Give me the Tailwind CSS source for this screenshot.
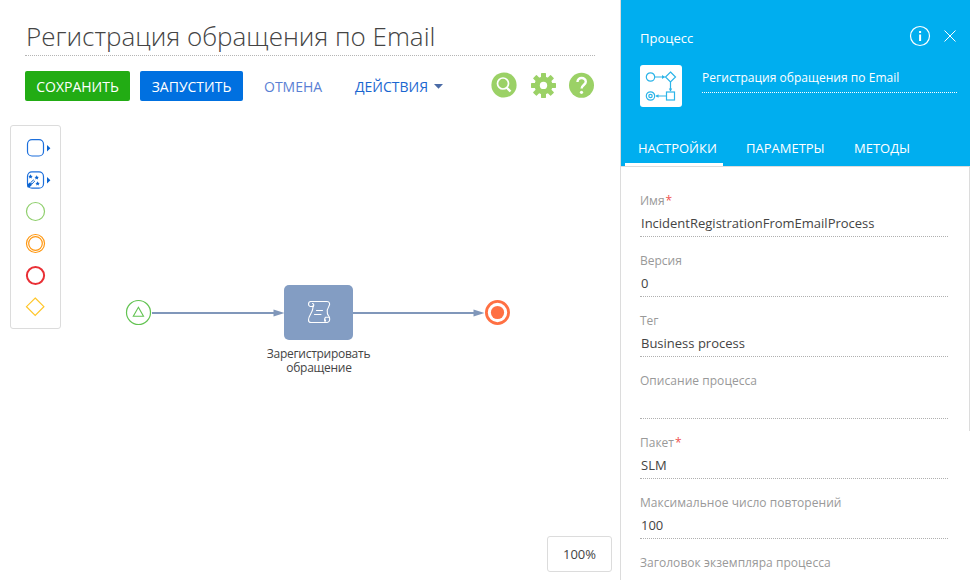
<!DOCTYPE html>
<html lang="ru">
<head>
<meta charset="utf-8">
<title>Регистрация обращения по Email</title>
<script src="https://cdn.jsdelivr.net/npm/@tailwindcss/browser@4"></script>
</head>
<body class="w-[970px] h-[580px] overflow-hidden bg-white font-['Open_Sans','Noto_Sans',sans-serif] text-[#444] whitespace-nowrap">
<div class="flex h-full">
  <main class="relative flex w-[620px] shrink-0 flex-col">
    <header class="ml-[25px] mr-[25px] h-[56px] border-b border-dotted border-[#b5b5b5] pt-[18px]">
      <h1 class="pl-px text-[26px] leading-[36px] font-light">Регистрация обращения по Email</h1>
    </header>
    <div class="flex h-[60px] items-center pl-[25px] text-[14px]">
      <button class="h-[30px] w-[105px] rounded-[2px] bg-[#22ac14] text-white pt-px">СОХРАНИТЬ</button>
      <button class="ml-[10px] h-[30px] w-[103px] rounded-[2px] bg-[#0070e0] text-white pt-px">ЗАПУСТИТЬ</button>
      <button class="ml-[21px] w-[59px] text-left text-[#5a7fd4] pt-px">ОТМЕНА</button>
      <button class="ml-[32px] flex w-[136px] items-center text-[#1a66d0] pt-px">ДЕЙСТВИЯ
        <svg class="ml-[6px]" width="9" height="5" viewBox="0 0 9 5"><path d="M0 0h9L4.5 4.7z" fill="#4a6ba6"/></svg>
      </button>
      <svg class="-mt-[3px]" width="104" height="26" viewBox="0 0 104 26">
        <g fill="#9bd166">
          <circle cx="13" cy="13" r="12.6"/>
          <circle cx="90.500" cy="13.300" r="12.500"/>
          <g transform="translate(52.500 13.400)">
            <circle r="9"/>
            <g id="teeth"><rect x="-2.500" y="-12.500" width="5" height="25" rx=".6"/><rect x="-12.500" y="-2.500" width="25" height="5" rx=".6"/></g>
            <use href="#teeth" transform="rotate(45)"/>
            <circle r="3.700" fill="#fff"/>
          </g>
        </g>
        <circle cx="12" cy="11.500" r="5.500" fill="none" stroke="#fff" stroke-width="1.700"/>
        <path d="M15.500 15.500l4 4" stroke="#fff" stroke-width="2.400"/>
        <path d="M86.500 10c0-5.300 8.300-5.200 8.300-.3 0 3.200-4.200 3.400-4.200 6.800" fill="none" stroke="#fff" stroke-width="2.400"/>
        <circle cx="90.500" cy="20.300" r="1.600" fill="#fff"/>
      </svg>
    </div>
    <aside class="ml-[10px] mt-[9px] h-[204px] w-[51px] rounded-[3px] border border-[#dcdcdc]">
      <svg width="49" height="202" viewBox="11 126 49 202" fill="none">
        <g stroke="#1c6fdc" stroke-width="1.200">
          <rect x="27.500" y="139.700" width="16" height="16.300" rx="4.500"/>
          <rect x="27.500" y="171.900" width="16" height="16.300" rx="4.500"/>
        </g>
        <g fill="#0a63cf">
          <path d="M47 145v6.500l3.400-3.200zM47 177v6.500l3.400-3.200z"/>
          <path d="M30.500 174.300l.7 1.400 1.500.2-1.100 1.100.3 1.500-1.400-.7-1.400.7.300-1.500-1.100-1.100 1.500-.2z"/>
          <path d="M36.700 175.300l.7 1.400 1.500.2-1.100 1.100.3 1.500-1.400-.7-1.400.7.300-1.500-1.100-1.100 1.500-.2z"/>
          <path d="M37.600 181.300l.7 1.400 1.500.2-1.100 1.100.3 1.500-1.400-.7-1.400.7.300-1.500-1.100-1.100 1.500-.2z"/>
          <path d="M27.300 184.600l2.500-2.200 2.300 2.300-2.800 2.800-2-.3z"/>
        </g>
        <path d="M30.500 182.800l2.900-2.800 1.200 1.200-2.800 2.900z" stroke="#0a63cf"/>
        <circle cx="35.500" cy="211.500" r="9" stroke="#8fcf6c" stroke-width="1.200"/>
        <g stroke="#ff9710" stroke-width="1.200"><circle cx="35.500" cy="243.500" r="9"/><circle cx="35.500" cy="243.500" r="6.800"/></g>
        <circle cx="35.500" cy="275.500" r="8.600" stroke="#e92f35" stroke-width="2"/>
        <path d="M35.200 298.000l8.700 8.700-8.700 8.700-8.700-8.700z" stroke="#ffc629" stroke-width="1.200"/>
      </svg>
    </aside>

    <!-- process diagram -->
    <svg class="absolute left-[120px] top-[280px]" width="400" height="65" viewBox="120 280 400 65" fill="none">
      <path d="M152 313h124M353 313h123" stroke="#8097ba" stroke-width="2"/>
      <path d="M273.500 309.500l11 3.500-11 3.500zM473.500 309.500l11 3.500-11 3.500z" fill="#8097ba"/>
      <circle cx="138.500" cy="312.500" r="12" stroke="#62c351" stroke-width="1.200"/>
      <path d="M138.400 307.300l5.100 8.900h-10.200z" stroke="#62c351" stroke-width="1.100"/>
      <rect x="284" y="285" width="69" height="55" rx="5" fill="#839dc3"/>
      <g stroke="#fff" stroke-width="1.100" stroke-linejoin="round" stroke-linecap="round">
        <path d="M310.800 301.500h16.200c2.700 0 3.300 2.800 1.900 4.700-1.500 2.200-2.200 4.500-1.500 7.300.5 2 1.800 2.700 2.200 4.600.5 2.600-.8 4.400-2.700 4.400h-15.900c-1.700 0-2.500-1.100-2.500-2.600 0-4 3.800-6.800 4.300-11.300.2-1.500.3-2.200.3-3.200"/>
        <path d="M310.800 301.500c-2.900 0-3.100 5 0 5h2.300c1-.9 1-2.900-.6-3"/>
        <path d="M328.500 317.300h-2.600c-1.300 0-1.500 2.300-.3 3.200M325.500 317.300c-1.700 1.700-1.200 5.200 1.400 5.200"/>
        <path d="M316.500 310.500h6M314.500 314.500h6.500"/>
      </g>
      <circle cx="497.500" cy="312.500" r="11.100" stroke="#ff7043" stroke-width="2.800"/>
      <circle cx="497.500" cy="312.500" r="6.600" fill="#ff7043"/>
    </svg>
    <div class="absolute left-[258px] top-[347px] w-[120px] text-center text-[12px] leading-[14px] tracking-[-0.27px]"><div class="pl-[1px]">Зарегистрировать</div><div class="pl-[2px]">обращение</div></div>
    <div class="absolute left-[547px] top-[536px] flex h-[36px] w-[65px] items-center justify-center rounded-[3px] border border-[#dcdcdc] pt-[2px] text-[13px]">100%</div>
  </main>

  <section class="flex w-[350px] flex-col border-l border-[#dcdcdc]">
    <div class="flex h-[166px] shrink-0 flex-col bg-[#00aeef] text-white">
      <div class="flex h-[65px] items-start pl-[19px] pt-[25px]">
        <span class="mt-[3px] w-[269px] text-[13px] leading-[20px]">Процесс</span>
        <svg width="50" height="22" viewBox="0 0 50 22" fill="none" stroke="#fff">
          <circle cx="11" cy="11" r="9.500" stroke-width="1.200"/>
          <path d="M11.100 9.500v6.500M11.100 6v2" stroke-width="2"/>
          <path d="M35.500 5.500l11 11M46.500 5.500l-11 11"/>
        </svg>
      </div>
      <div class="flex pl-[19px]">
        <svg width="42" height="42" viewBox="0 0 42 42" fill="none" stroke="#2cb4e8" stroke-width="1.200">
          <rect width="42" height="42" rx="3" fill="#fff" stroke="none"/>
          <circle cx="10.500" cy="12" r="4.200"/><path d="M30.500 7l5 5-5 5-5-5z"/>
          <rect x="26.500" y="27" width="8" height="8"/>
          <circle cx="10.500" cy="31" r="4.200"/><circle cx="10.500" cy="31" r="1.700"/>
          <path d="M14.700 12h10M30.500 17v9M26.500 31H16"/>
          <path d="M22 10l3 2-3 2zM28.800 23.500h3.400l-1.700 3zM18.500 29.200v3.600l-3-1.800z" fill="#2cb4e8" stroke="none"/>
        </svg>
        <div class="ml-[20px] h-[28px] w-[255px] border-b border-dotted border-white pt-[3px] text-[12px] leading-[20px] tracking-[0.04px]">Регистрация обращения по Email</div>
      </div>
      <nav class="mt-auto flex h-[31px] pl-[4px] text-[13px] leading-[26px]">
        <span class="w-[98px] border-b-[3px] border-white pl-[13px]">НАСТРОЙКИ</span>
        <span class="ml-[23px] w-[79px]">ПАРАМЕТРЫ</span>
        <span class="ml-[29px]">МЕТОДЫ</span>
      </nav>
    </div>
    <div class="h-[265px] shrink-0 border-t border-r border-[#dcdcdc] pl-[19px] pt-[24px]">
      <div class="flex w-[308px] flex-col gap-[14px] text-[13px]">
        <div class="h-[46px] border-b border-dotted border-[#b0b0b0]"><div class="text-[12px] leading-[20px] text-[#999]">Имя<span class="pl-px text-[#ef5350]">*</span></div><div class="pl-px leading-[25px]">IncidentRegistrationFromEmailProcess</div></div>
        <div class="h-[46px] border-b border-dotted border-[#b0b0b0]"><div class="text-[12px] leading-[20px] text-[#999]">Версия</div><div class="pl-px leading-[25px]">0</div></div>
        <div class="h-[46px] border-b border-dotted border-[#b0b0b0]"><div class="text-[12px] leading-[20px] text-[#999]">Тег</div><div class="pl-px leading-[25px]">Business process</div></div>
        <div class="h-[48px] border-b border-dotted border-[#b0b0b0]"><div class="text-[12px] leading-[20px] text-[#999] tracking-[0.04px]">Описание процесса</div></div>
        <div class="h-[46px] border-b border-dotted border-[#b0b0b0]"><div class="text-[12px] leading-[20px] text-[#999]">Пакет<span class="pl-px text-[#ef5350]">*</span></div><div class="pl-px leading-[25px]">SLM</div></div>
        <div class="h-[46px] border-b border-dotted border-[#b0b0b0]"><div class="text-[12px] leading-[20px] text-[#999] tracking-[0.04px]">Максимальное число повторений</div><div class="pl-px leading-[25px]">100</div></div>
        <div class="text-[12px] leading-[20px] text-[#999] tracking-[0.04px]">Заголовок экземпляра процесса</div>
      </div>
    </div>
  </section>
</div>
</body>
</html>
